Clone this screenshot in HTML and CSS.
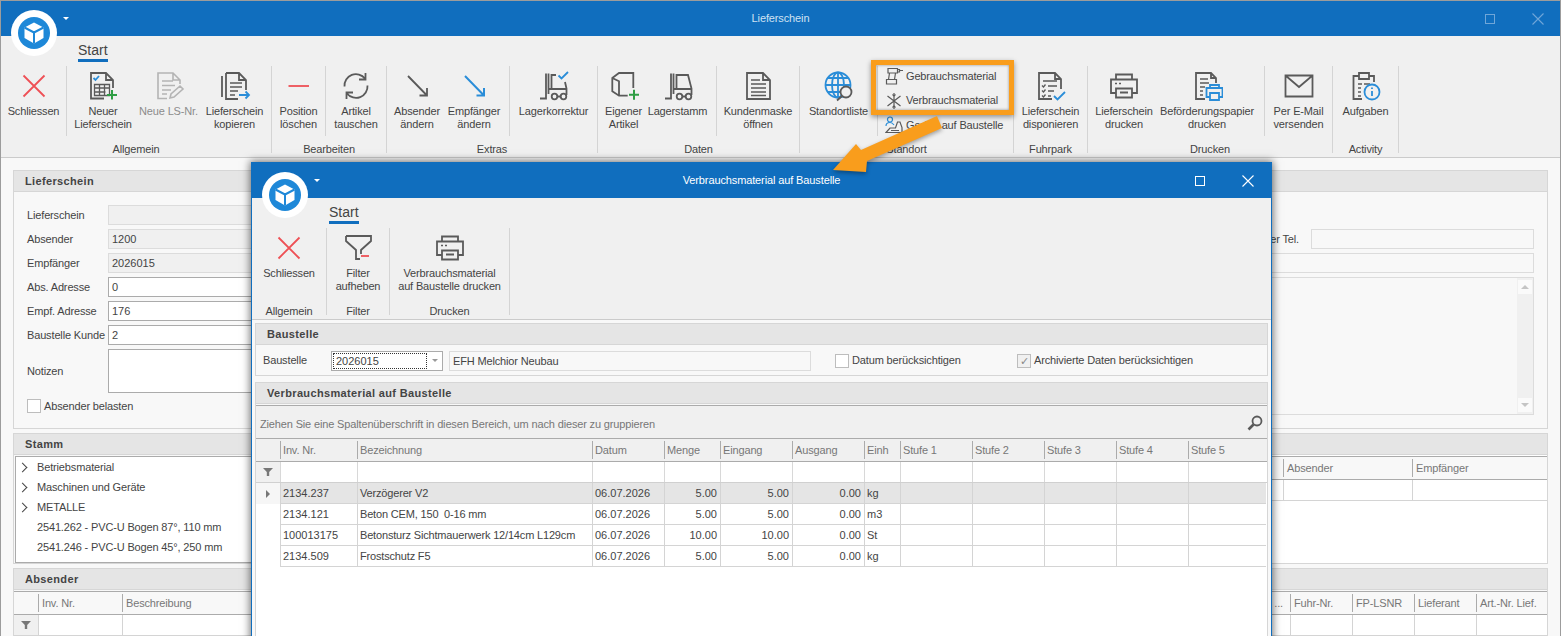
FILE: index.html
```html
<!DOCTYPE html>
<html lang="de">
<head>
<meta charset="utf-8">
<title>Lieferschein</title>
<link rel="stylesheet" href="styles.css">
</head>
<body>
<svg class="defs" aria-hidden="true">
  <symbol id="i-close" viewBox="0 0 32 32"><path class="sr" d="M5.500 5.500L26.500 26.500M26.500 5.500L5.500 26.500"/></symbol>
  <symbol id="i-new" viewBox="0 0 32 32"><path class="s" d="M17 28.500H4V3H19L26 10V18M19 3V10H26"/><path class="sb" d="M6.500 8l2 2 3.500-4"/><path class="s thin" d="M7.500 14.500H22.500V25.500H7.500ZM7.500 18h15M7.500 22h11M12.500 14.500v11M17.500 14.500v11"/><path class="sg" d="M25 20v9.500M20 25h10"/></symbol>
  <symbol id="i-newno" viewBox="0 0 32 32"><path class="sl" d="M14 28.500H5V3H20L27 10V14M20 3V10H27M9 11h11M9 15.500h13M9 20h9M9 24h5M17 28l1-4 9-8 3 3-9 8z"/></symbol>
  <symbol id="i-copy" viewBox="0 0 32 32"><path class="s" d="M3 6V27M7 3H20L27 10V20M19 29H7V3M20 3V10H27"/><path class="s thin" d="M11 13h12M11 17h12M11 21h8M11 25h5"/><path class="sb" d="M20 25h10M26.500 21.500L30 25l-3.500 3.500"/></symbol>
  <symbol id="i-minus" viewBox="0 0 32 32"><path class="sr" d="M5.500 16H26"/></symbol>
  <symbol id="i-refresh" viewBox="0 0 32 32"><path class="s" d="M4.500 16.500A11.500 11.500 0 0 1 25 8.500M25.500 3V9.500H19M27.500 15.500A11.500 11.500 0 0 1 7 23.500M6.500 29V22.500H13"/></symbol>
  <symbol id="i-arrow" viewBox="0 0 32 32"><path class="s" d="M7 6L26 25.500M26 18V25.500H18.500"/></symbol>
  <symbol id="i-arrowb" viewBox="0 0 32 32"><path class="sb w2" d="M7 6L26 25.500M26 18V25.500H18.500"/></symbol>
  <symbol id="i-lift" viewBox="0 0 32 32"><path class="s" d="M3 28.500H9V3.500M11.500 3.500V24M14.500 19V5H26L29.500 18.500V25M12 19H30M20.500 26.500H23.500"/><circle class="s" cx="17.500" cy="26.500" r="2.800"/><circle class="s" cx="26.500" cy="26.500" r="2.800"/></symbol>
  <symbol id="i-liftc" viewBox="0 0 32 32"><path class="s" d="M2 28.500H8V3.500M10.500 3.500V24M13.500 19V5H18M27 12L28.500 18.500V25M11 19H29M19.500 26.500H22.500"/><circle class="s" cx="16.500" cy="26.500" r="2.800"/><circle class="s" cx="25.500" cy="26.500" r="2.800"/><path class="sb" d="M20.500 5.500l3 3 6.500-6.500"/></symbol>
  <symbol id="i-box" viewBox="0 0 32 32"><path class="s" d="M19.700 25.700H11L4.300 21.300V8L11 3H25.300V18M4.300 8L11 11.300V25.700"/><path class="sg" d="M26 19.700v10M21 24.700h10"/></symbol>
  <symbol id="i-doc" viewBox="0 0 32 32"><path class="s" d="M5 3H21L28 10V29H5ZM21 3V10H28"/><path class="s thin" d="M9 10h9M9 14h15M9 18h15M9 22h15M9 25.500h15"/></symbol>
  <symbol id="i-globe" viewBox="0 0 32 32"><circle class="sb" cx="15" cy="15" r="12.500"/><path class="sb" d="M2.500 15H27.500M15 2.500V27.500M4.500 8H25.500M4.500 22H25.500"/><ellipse class="sb" cx="15" cy="15" rx="6" ry="12.500"/><circle class="mag" cx="23" cy="22" r="5.500"/><path class="s" d="M19 26L14 30.500"/></symbol>
  <symbol id="i-drill" viewBox="0 0 18 18"><path class="s t" d="M3 1.500H12.500V6H3ZM12.500 2.500H14.500V5H12.500ZM14.500 3.500H18M4.500 6L3.500 12.500M10.500 6L9.500 12.500M1.500 12.500H11.500V17H1.500Z"/></symbol>
  <symbol id="i-snow" viewBox="0 0 18 18"><path class="s t" d="M9 1V17M2.500 4L15.500 14M15.500 4L2.500 14"/><path class="s t" d="M7.500 2.500L9 4l1.500-1.500M7.500 15.500L9 14l1.500 1.500"/></symbol>
  <symbol id="i-digger" viewBox="0 0 18 18"><circle class="sb t" cx="5" cy="3.500" r="2.500"/><path class="sb t" d="M1 10C1 7 3 6.500 5 6.500S8 7.500 9 9"/><path class="s t" d="M1 16.500L5 12H10.500L12.500 6H15L17 11.500V16.500H1ZM6 14.500h8"/></symbol>
  <symbol id="i-dispo" viewBox="0 0 32 32"><path class="s" d="M17 29H4V3H20L26 9V19M20 3V9H26"/><path class="s thin" d="M8 11h14M7 15.500l1.500 1.500 2-2.500M13 16h9M7 20.500l1.500 1.500 2-2.500M13 21h6M7 25.500l1.500 1.500 2-2.500M13 26h3"/><path class="sb" d="M19 26l3.500 3.500L30 22"/></symbol>
  <symbol id="i-print" viewBox="0 0 32 32"><path class="s" d="M8 9.500V4.500H24V9.500M8 23H3V9.500H29V23H24M8 18.500H24V27.500H8ZM12 22.500H20"/><path class="s thin" d="M7 13.500h2M11 13.500h2"/></symbol>
  <symbol id="i-docp" viewBox="0 0 32 32"><path class="s" d="M14 29H5V3H20L25 8V13M20 3V8H25"/><path class="s thin" d="M9 9h8M9 13h9M9 17h5M9 21h3M9 25h3"/><path class="sb" d="M19 18V15H28V18M19 27H15.500V18H31.500V27H28M19 23H28V30H19Z"/></symbol>
  <symbol id="i-mail" viewBox="0 0 32 32"><path class="s" d="M2.500 5.500H29.500V26.500H2.500ZM2.500 5.500L16 17L29.500 5.500"/></symbol>
  <symbol id="i-task" viewBox="0 0 32 32"><path class="s" d="M12 29H3.500V6H9M19 6H24V12M9 3H19V9H9Z"/><path class="s thin" d="M8 14h4M8 18h3M8 22h3M8 26h3M14 14h6"/><circle class="sb" cx="22" cy="22" r="7.500"/><path class="sb" d="M22 21V26M22 17.500V19"/></symbol>
  <symbol id="i-funnel" viewBox="0 0 32 32"><path class="s" d="M4 4H29V9L19 18V22M4 4V9L14 18V27H18"/><path class="sr" d="M19 24H27"/></symbol>
  <symbol id="i-logo" viewBox="0 0 46 46"><circle class="logo-w" cx="23" cy="23" r="23"/><circle class="logo-b" cx="23" cy="23" r="16"/><path class="logo-c" d="M23 12.500L32.500 17.500V28L23 33.500L13.500 28V17.500Z"/><path class="logo-l" d="M13.500 17.500L23 22.500L32.500 17.500M23 22.500V33.500"/></symbol>
  <symbol id="i-find" viewBox="0 0 16 16"><circle class="s" cx="10" cy="6" r="4.500"/><path class="s w3" d="M6.500 9.500L1.500 14.500"/></symbol>
  <symbol id="i-x" viewBox="0 0 12 12"><path class="xl" d="M.5 .5L11.500 11.500M11.500 .5L.5 11.500"/></symbol>
</svg>

<div class="app">
  <header class="titlebar">
    <div class="tb-left"><span class="qat"></span></div>
    <div class="tb-title dim">Lieferschein</div>
    <div class="tb-right dim-btns">
      <span class="btn-max"></span>
      <svg class="btn-close"><use href="#i-x"/></svg>
    </div>
  </header>

  <section class="ribbon">
    <div class="tabs"><span class="tab">Start</span></div>
    <div class="groups">
      <div class="group g271">
        <div class="items">
          <div class="item sep w66"><svg class="ico"><use href="#i-close"/></svg><span>Schliessen</span></div>
          <div class="item w72"><svg class="ico"><use href="#i-new"/></svg><span>Neuer<br>Lieferschein</span></div>
          <div class="item w59 off"><svg class="ico"><use href="#i-newno"/></svg><span>Neue LS-Nr.</span></div>
          <div class="item w73"><svg class="ico"><use href="#i-copy"/></svg><span>Lieferschein<br>kopieren</span></div>
        </div>
        <div class="glabel">Allgemein</div>
      </div>
      <div class="group g115">
        <div class="items">
          <div class="item sep w54"><svg class="ico"><use href="#i-minus"/></svg><span>Position<br>löschen</span></div>
          <div class="item w60"><svg class="ico"><use href="#i-refresh"/></svg><span>Artikel<br>tauschen</span></div>
        </div>
        <div class="glabel">Bearbeiten</div>
      </div>
      <div class="group g211">
        <div class="items">
          <div class="item w60"><svg class="ico"><use href="#i-arrow"/></svg><span>Absender<br>ändern</span></div>
          <div class="item sep w63 pr8"><svg class="ico"><use href="#i-arrowb"/></svg><span>Empfänger<br>ändern</span></div>
          <div class="item w87"><svg class="ico"><use href="#i-liftc"/></svg><span>Lagerkorrektur</span></div>
        </div>
        <div class="glabel">Extras</div>
      </div>
      <div class="group g202">
        <div class="items">
          <div class="item w51"><svg class="ico"><use href="#i-box"/></svg><span>Eigener<br>Artikel</span></div>
          <div class="item sep w68 pr10"><svg class="ico"><use href="#i-lift"/></svg><span>Lagerstamm</span></div>
          <div class="item w82"><svg class="ico"><use href="#i-doc"/></svg><span>Kundenmaske<br>öffnen</span></div>
        </div>
        <div class="glabel">Daten</div>
      </div>
      <div class="group g214">
        <div class="items">
          <div class="item sep w78"><svg class="ico"><use href="#i-globe"/></svg><span>Standortliste</span></div>
          <div class="smalls">
            <div class="small"><svg class="sico"><use href="#i-drill"/></svg><span>Gebrauchsmaterial</span></div>
            <div class="small"><svg class="sico"><use href="#i-snow"/></svg><span>Verbrauchsmaterial</span></div>
            <div class="small"><svg class="sico"><use href="#i-digger"/></svg><span>Geräte auf Baustelle</span></div>
          </div>
        </div>
        <div class="glabel">Standort</div>
      </div>
      <div class="group g74">
        <div class="items">
          <div class="item w73"><svg class="ico"><use href="#i-dispo"/></svg><span>Lieferschein<br>disponieren</span></div>
        </div>
        <div class="glabel">Fuhrpark</div>
      </div>
      <div class="group g245">
        <div class="items">
          <div class="item w72"><svg class="ico"><use href="#i-print"/></svg><span>Lieferschein<br>drucken</span></div>
          <div class="item sep w105 pr10"><svg class="ico"><use href="#i-docp"/></svg><span>Beförderungspapier<br>drucken</span></div>
          <div class="item w67"><svg class="ico"><use href="#i-mail"/></svg><span>Per E-Mail<br>versenden</span></div>
        </div>
        <div class="glabel">Drucken</div>
      </div>
      <div class="group g66">
        <div class="items">
          <div class="item w65"><svg class="ico"><use href="#i-task"/></svg><span>Aufgaben</span></div>
        </div>
        <div class="glabel">Activity</div>
      </div>
    </div>
  </section>

  <main class="content">
    <section class="panel p-ls">
      <h2 class="phead">Lieferschein</h2>
      <div class="form">
        <div class="fcol-left">
          <label class="lbl">Lieferschein</label><div class="inp ro"></div>
          <label class="lbl">Absender</label><div class="inp ro">1200</div>
          <label class="lbl">Empfänger</label><div class="inp ro">2026015</div>
          <label class="lbl">Abs. Adresse</label><div class="inp">0</div>
          <label class="lbl">Empf. Adresse</label><div class="inp">176</div>
          <label class="lbl">Baustelle Kunde</label><div class="inp">2</div>
          <label class="lbl">Notizen</label><div class="inp area"></div>
          <div class="chk-row"><span class="chk"></span><span>Absender belasten</span></div>
        </div>
        <div class="fcol-right">
          <div class="rrow"><span class="rlbl">Absender Tel.</span><div class="inp flat rinp"></div></div>
          <div class="inp flat"></div>
          <div class="memo">
            <div class="sbar"><span class="sbtn"><i class="up"></i></span><span class="sbtn"><i class="down"></i></span></div>
          </div>
        </div>
      </div>
    </section>

    <section class="panel p-st">
      <h2 class="phead">Stamm</h2>
      <div class="st-body">
        <ul class="tree">
          <li class="node">Betriebsmaterial</li>
          <li class="node">Maschinen und Geräte</li>
          <li class="node">METALLE</li>
          <li>2541.262 - PVC-U Bogen 87°, 110 mm</li>
          <li>2541.246 - PVC-U Bogen 45°, 250 mm</li>
        </ul>
        <div class="st-grid">
          <div class="shead"><span class="hc c-fill"></span><span class="hc c129">Absender</span><span class="hc c-rest">Empfänger</span></div>
          <div class="sfilter"><span class="c-fill"></span><span class="fc c129"></span><span class="fc c-rest"></span></div>
        </div>
      </div>
    </section>

    <section class="panel p-ab">
      <h2 class="phead">Absender</h2>
      <div class="ab-grid">
        <div class="shead">
          <span class="hc c23 nob"></span><span class="hc c84">Inv. Nr.</span><span class="hc c-fill">Beschreibung</span>
          <span class="hc c60 dots">...</span><span class="hc c62">Fuhr-Nr.</span><span class="hc c62">FP-LSNR</span><span class="hc c62">Lieferant</span><span class="hc c71">Art.-Nr. Lief.</span>
        </div>
        <div class="sfilter">
          <span class="c23 fico"><i class="fun"></i></span><span class="fc c84"></span><span class="fc c-fill"></span>
          <span class="fc c60"></span><span class="fc c62"></span><span class="fc c62"></span><span class="fc c62"></span><span class="fc c71"></span>
        </div>
      </div>
    </section>
  </main>

  <svg class="logo logo-main"><use href="#i-logo"/></svg>

  <div class="dialog">
    <header class="titlebar">
      <div class="tb-left"><span class="qat"></span></div>
      <div class="tb-title">Verbrauchsmaterial auf Baustelle</div>
      <div class="tb-right d-btns">
        <span class="btn-max"></span>
        <svg class="btn-close"><use href="#i-x"/></svg>
      </div>
    </header>
    <section class="ribbon">
      <div class="tabs"><span class="tab">Start</span></div>
      <div class="groups">
        <div class="group g75"><div class="items"><div class="item w74"><svg class="ico"><use href="#i-close"/></svg><span>Schliessen</span></div></div><div class="glabel">Allgemein</div></div>
        <div class="group g63"><div class="items"><div class="item w62"><svg class="ico"><use href="#i-funnel"/></svg><span>Filter<br>aufheben</span></div></div><div class="glabel">Filter</div></div>
        <div class="group g120"><div class="items"><div class="item w119"><svg class="ico"><use href="#i-print"/></svg><span>Verbrauchsmaterial<br>auf Baustelle drucken</span></div></div><div class="glabel">Drucken</div></div>
      </div>
    </section>
    <div class="d-content">
      <section class="panel d-p1">
        <h2 class="phead">Baustelle</h2>
        <div class="bau">
          <span class="b-lbl">Baustelle</span>
          <div class="combo"><span class="focus">2026015</span><span class="cbtn"><i class="down"></i></span></div>
          <div class="inp flat b-name">EFH Melchior Neubau</div>
          <div class="chk-row c1"><span class="chk"></span><span>Datum berücksichtigen</span></div>
          <div class="chk-row c2"><span class="chk on">✓</span><span>Archivierte Daten berücksichtigen</span></div>
        </div>
      </section>
      <section class="panel d-p2">
        <h2 class="phead">Verbrauchsmaterial auf Baustelle</h2>
        <div class="grid">
          <div class="find"><span>Ziehen Sie eine Spaltenüberschrift in diesen Bereich, um nach dieser zu gruppieren</span><svg class="findi"><use href="#i-find"/></svg></div>
          <div class="row r-head">
            <span></span><span>Inv. Nr.</span><span>Bezeichnung</span><span>Datum</span><span>Menge</span><span>Eingang</span><span>Ausgang</span><span>Einh</span><span>Stufe 1</span><span>Stufe 2</span><span>Stufe 3</span><span>Stufe 4</span><span>Stufe 5</span>
          </div>
          <div class="row r-filter">
            <span class="ind"><i class="fun"></i></span><span></span><span></span><span></span><span></span><span></span><span></span><span></span><span></span><span></span><span></span><span></span><span></span>
          </div>
          <div class="row r-data sel">
            <span class="ind"><i class="cur"></i></span><span>2134.237</span><span class="tx">Verzögerer V2</span><span>06.07.2026</span><span class="n">5.00</span><span class="n">5.00</span><span class="n">0.00</span><span>kg</span><span></span><span></span><span></span><span></span><span></span>
          </div>
          <div class="row r-data">
            <span class="ind"></span><span>2134.121</span><span class="tx">Beton CEM, 150&nbsp; 0-16 mm</span><span>06.07.2026</span><span class="n">5.00</span><span class="n">5.00</span><span class="n">0.00</span><span>m3</span><span></span><span></span><span></span><span></span><span></span>
          </div>
          <div class="row r-data">
            <span class="ind"></span><span>100013175</span><span class="tx">Betonsturz Sichtmauerwerk 12/14cm L129cm</span><span>06.07.2026</span><span class="n">10.00</span><span class="n">10.00</span><span class="n">0.00</span><span>St</span><span></span><span></span><span></span><span></span><span></span>
          </div>
          <div class="row r-data">
            <span class="ind"></span><span>2134.509</span><span class="tx">Frostschutz F5</span><span>06.07.2026</span><span class="n">5.00</span><span class="n">5.00</span><span class="n">0.00</span><span>kg</span><span></span><span></span><span></span><span></span><span></span>
          </div>
        </div>
      </section>
    </div>
    <svg class="logo logo-dlg"><use href="#i-logo"/></svg>
  </div>

  <div class="mark"></div>
  <svg class="pointer" viewBox="825 110 125 70"><polygon class="pointer-s" points="937,116 942,128 867,161 866,172 833,170 856,144 861,150"/></svg>
</div>
</body>
</html>
```
FILE: styles.css
```css
* { box-sizing: border-box; }
html, body { margin: 0; padding: 0; background: #f8f8f8; }
body { font: 11px/13px "Liberation Sans", Arial, sans-serif; letter-spacing: -.15px; color: #444; }
h2, ul { margin: 0; padding: 0; }
.defs { position: absolute; width: 0; height: 0; }

.s, .sb, .sg, .sr, .sl { fill: none; stroke-width: 1.8; }
.s { stroke: #5a5a5a; }
.thin { stroke-width: 1.3; }
.t { stroke-width: 1.2; }
.w3 { stroke-width: 2.6; }
.w2 { stroke-width: 2; }
.sb { stroke: #2a8dd8; }
.sg { stroke: #2f9e44; stroke-width: 2; }
.sr { stroke: #ee5055; stroke-width: 1.8; }
.sl { stroke: #b4b4b4; stroke-width: 1.6; }
.mag { fill: #f0f0f0; stroke: #5a5a5a; stroke-width: 1.8; }
.xl { fill: none; stroke: currentColor; stroke-width: 1.1; }
.logo-w { fill: #fff; }
.logo-b { fill: #1e88d8; }
.logo-c { fill: #fff; }
.logo-l { fill: none; stroke: #1e88d8; stroke-width: 2; }

.app {
  position: relative;
  width: 1561px;
  height: 636px;
  overflow: hidden;
  background: #f8f8f8;
  border: 1px solid #9c9c9c;
  border-bottom: 0;
}

.titlebar {
  display: grid;
  grid-template-columns: 1fr auto 1fr;
  align-items: center;
  height: 35px;
  background: #106ebe;
  color: #fff;
}
.tb-left { padding-left: 62px; }
.qat {
  display: block;
  width: 0;
  height: 0;
  border: 3.500px solid transparent;
  border-top: 3.500px solid #fff;
  border-bottom: 0;
}
.tb-title { text-align: center; letter-spacing: -.12px; }
.dim { color: #cfe2f3; }
.tb-right { display: flex; justify-content: flex-end; align-items: center; padding-right: 16px; gap: 37px; }
.btn-max { width: 10px; height: 10px; border: 1px solid #fff; }
.btn-close { width: 12px; height: 12px; color: #fff; }
.dim-btns .btn-max { border-color: #6fa6d8; }
.dim-btns .btn-close { color: #6fa6d8; }

.ribbon {
  height: 122px;
  background: #f0f0f0;
  border-bottom: 1px solid #cbcbcb;
}
.tabs { height: 30px; padding: 6px 0 0 77px; }
.tab {
  display: inline-block;
  height: 20px;
  font-size: 14px;
  line-height: 16px;
  letter-spacing: 0;
  border-bottom: 3px solid #106ebe;
}
.groups { display: flex; height: 87px; }
.group { display: flex; flex-direction: column; border-right: 1px solid #d4d4d4; }
.items { display: flex; height: 70px; }
.glabel { height: 17px; line-height: 26px; text-align: center; white-space: nowrap; }
.item {
  display: flex;
  flex-direction: column;
  align-items: center;
  padding-top: 4px;
  text-align: center;
  white-space: nowrap;
}
.item > span { margin-top: 3px; }
.sep { border-right: 1px solid #d4d4d4; }
.off { color: #8c8c8c; }
.ico { width: 32px; height: 32px; flex: none; }
.pr8 { padding-right: 8px; }
.pr10 { padding-right: 10px; }

.g271 { width: 271px; } .g115 { width: 115px; } .g211 { width: 211px; } .g202 { width: 202px; }
.g214 { width: 214px; } .g74 { width: 74px; } .g245 { width: 245px; } .g66 { width: 66px; }
.g75 { width: 75px; } .g63 { width: 63px; } .g120 { width: 120px; }
.w51 { width: 51px; } .w54 { width: 54px; } .w59 { width: 59px; } .w60 { width: 60px; }
.w62 { width: 62px; } .w63 { width: 63px; } .w65 { width: 65px; } .w66 { width: 66px; }
.w67 { width: 67px; } .w68 { width: 68px; } .w72 { width: 72px; } .w73 { width: 73px; }
.w74 { width: 74px; } .w78 { width: 78px; } .w82 { width: 82px; } .w87 { width: 87px; }
.w105 { width: 105px; } .w119 { width: 119px; }

.smalls { margin-top: -2px; padding-left: 7px; width: 135px; }
.small { display: flex; align-items: center; gap: 3px; height: 24.500px; white-space: nowrap; }
.sico { width: 18px; height: 18px; flex: none; }

.content { padding: 12px 12px 0; }
.panel { background: #f8f8f8; border: 1px solid #d6d6d6; overflow: hidden; }
.phead {
  height: 21px;
  padding-left: 11px;
  font-size: 11px;
  line-height: 20px;
  font-weight: bold;
  letter-spacing: .35px;
  color: #444;
  background: #e5e5e5;
  border-bottom: 1px solid #d6d6d6;
}
.p-ls { height: 259px; margin-bottom: 4px; }
.p-st { height: 131px; margin-bottom: 4px; }
.p-ab { height: 80px; }

.form { display: flex; justify-content: space-between; padding: 13px 13px 0; }
.fcol-left {
  display: grid;
  grid-template-columns: 81px 400px;
  grid-template-rows: repeat(6, 20px) 44px 16px;
  row-gap: 4px;
  align-content: start;
}
.lbl { line-height: 20px; white-space: nowrap; }
.inp {
  height: 20px;
  padding-left: 3px;
  line-height: 18px;
  letter-spacing: 0;
  background: #fff;
  border: 1px solid #ababab;
  white-space: nowrap;
}
.inp.ro { background: #f0f0f0; border-color: #dcdcdc; }
.inp.flat { background: #f8f8f8; border-color: #dcdcdc; }
.area { height: 44px; }
.fcol-left .lbl:nth-of-type(7) { height: 44px; line-height: 44px; }
.chk-row { display: flex; align-items: center; gap: 3px; white-space: nowrap; }
.fcol-left .chk-row { grid-column: 1 / 3; margin-top: 2px; }
.chk {
  flex: none;
  width: 14px;
  height: 14px;
  background: #fff;
  border: 1px solid #bdbdbd;
}
.chk.on { background: #f0f0f0; color: #888; font-size: 11px; line-height: 12px; text-align: center; }

.fcol-right { display: flex; flex-direction: column; gap: 4px; width: 534px; padding-top: 24px; }
.rrow { display: flex; justify-content: flex-end; align-items: center; gap: 12px; }
.rinp { width: 223px; }
.rlbl { white-space: nowrap; }
.memo { display: flex; justify-content: flex-end; height: 138px; background: #f8f8f8; border: 1px solid #dcdcdc; }
.sbar {
  display: flex;
  flex-direction: column;
  justify-content: space-between;
  width: 16px;
  padding: 2px 1px;
  background: #f0f0f0;
}
.sbtn { display: flex; align-items: center; justify-content: center; height: 14px; background: #fafafa; }
.up, .down { display: block; width: 0; height: 0; border: 4px solid transparent; border-top-width: 0; border-bottom: 4px solid #c4c4c4; }
.down { border-bottom-width: 0; border-top: 4px solid #c4c4c4; border-bottom-color: transparent; }

.st-body { display: flex; justify-content: space-between; height: 109px; background: #f8f8f8; }
.tree {
  width: 400px;
  height: 107px;
  margin: 1px 0 0 1px;
  list-style: none;
  background: #fff;
  border: 1px solid #ababab;
}
.tree li { position: relative; height: 20px; padding-left: 21px; line-height: 20px; white-space: nowrap; }
.node::before {
  content: "";
  position: absolute;
  left: 3px;
  top: 7px;
  width: 6px;
  height: 6px;
  border-top: 1.500px solid #444;
  border-right: 1.500px solid #444;
  transform: rotate(45deg);
}
.st-grid { width: 540px; background: #fff; }
.ab-grid { background: #fff; }
.shead {
  display: flex;
  height: 24px;
  margin-top: 1px;
  padding: 2px 0;
  background: #f8f8f8;
  border-top: 1px solid #ababab;
  border-bottom: 1px solid #ababab;
  color: #777;
}
.hc { height: 18px; padding-left: 3px; line-height: 18px; border-left: 1px solid #ababab; white-space: nowrap; }
.hc.nob { border-left: 0; }
.dots { text-align: right; padding-right: 7px; }
.sfilter { display: flex; height: 21px; background: #fff; border-bottom: 1px solid #d4d4d4; }
.fc { border-left: 1px solid #d4d4d4; }
.fico { display: flex; align-items: center; justify-content: center; background: #f0f0f0; }
.c-fill { flex: 1; }
.c129 { width: 129px; }
.c-rest { width: 135px; }
.c23 { width: 24px; }
.c84 { width: 84px; }
.c60 { width: 60px; }
.c62 { width: 62px; }
.c71 { width: 71px; }
.fun {
  display: block;
  width: 10px;
  height: 8px;
  background: #777;
  clip-path: polygon(0 0, 100% 0, 62% 50%, 62% 100%, 38% 100%, 38% 50%);
}

.logo { position: absolute; width: 46px; height: 46px; }
.logo-main { left: 10px; top: 9px; }
.logo-dlg { left: 10px; top: 9px; }

.dialog {
  position: absolute;
  left: 250px;
  top: 161px;
  width: 1021px;
  height: 500px;
  background: #f8f8f8;
  border: 1px solid #106ebe;
  box-shadow: 0 0 8px 1px rgba(0, 0, 0, .55);
}
.d-btns { gap: 37px; padding-right: 17px; }
.d-content { padding: 3px 3px 0; }
.d-p1 { height: 53px; margin-bottom: 6px; }
.d-p2 { height: 300px; }
.bau { display: flex; align-items: center; height: 31px; padding-left: 7px; }
.b-lbl { width: 68px; }
.combo {
  display: flex;
  align-items: center;
  width: 112px;
  height: 20px;
  background: #fff;
  border: 1px solid #ababab;
}
.focus { width: 94px; height: 16px; margin-left: 1px; padding-left: 2px; line-height: 14px; letter-spacing: 0; border: 1px dotted #333; }
.cbtn { display: flex; flex: 1; align-items: center; justify-content: center; }
.cbtn .down { border-width: 3px 3px 0; border-top-color: #999; }
.b-name { width: 362px; margin-left: 6px; letter-spacing: -.15px; }
.c1 { margin-left: 24px; width: 182px; }

.grid { background: #fff; height: 270px; }
.find {
  display: flex;
  justify-content: space-between;
  align-items: center;
  height: 34px;
  margin-top: 1px;
  padding: 5px 4px 0 4px;
  color: #777;
  background: #f0f0f0;
  border-top: 1px solid #ababab;
  border-bottom: 1px solid #ababab;
}
.findi { width: 16px; height: 16px; margin-top: -3px; }
.row {
  display: grid;
  grid-template-columns: 24px 77px 235px 72px 56px 72px 72px 36px 72px 72px 72px 72px 78px;
  white-space: nowrap;
}
.r-head { height: 23px; padding-top: 2px; background: #f0f0f0; border-bottom: 1px solid #ababab; color: #777; }
.r-head span { height: 18px; padding-left: 2px; line-height: 18px; border-left: 1px solid #ababab; }
.r-head span:first-child { border-left: 0; }
.r-filter { height: 21px; border-bottom: 1px solid #d0d0d0; }
.r-filter span { border-left: 1px solid #d8d8d8; }
.r-filter .ind, .r-data .ind { border-left: 0; border-bottom: 0; }
.r-filter .ind { display: flex; align-items: center; justify-content: center; background: #f0f0f0; }
.r-data { height: 21px; }
.r-data span { padding: 0 3px 0 2px; line-height: 20px; letter-spacing: 0; border-left: 1px solid #d4d4d4; border-bottom: 1px solid #d4d4d4; overflow: hidden; }
.r-data .tx { letter-spacing: -.17px; }
.r-data .ind { display: flex; align-items: center; justify-content: center; padding: 0; background: #fff; }
.r-data .n { text-align: right; }
.sel span { background: #e5e5e5; }
.r-data.sel .ind { background: #f6f6f6; }
.cur { display: block; width: 0; height: 0; border-left: 4px solid #777; border-top: 4px solid transparent; border-bottom: 4px solid transparent; }

.mark {
  position: absolute;
  left: 870px;
  top: 59px;
  width: 143px;
  height: 55px;
  border: 5px solid #f99d1c;
  box-shadow: 0 2px 5px rgba(0, 0, 0, .4), inset 0 0 3px rgba(0, 0, 0, .4);
}
.pointer { position: absolute; left: 824px; top: 109px; width: 125px; height: 70px; overflow: visible; }
.pointer-s { fill: #f99d1c; filter: drop-shadow(0 2px 2px rgba(0, 0, 0, .35)); }
```
